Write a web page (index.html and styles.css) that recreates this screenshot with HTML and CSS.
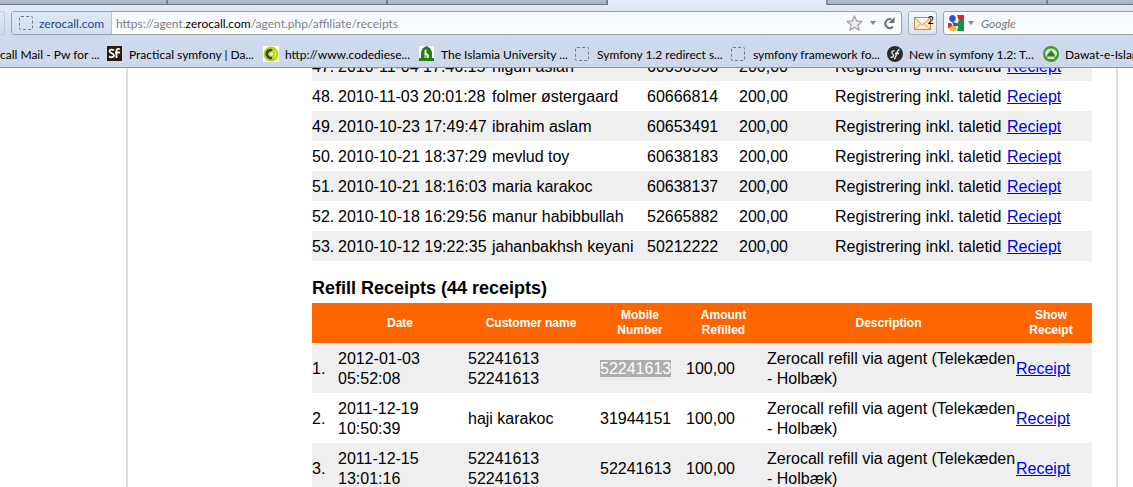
FILE: index.html
```html
<!DOCTYPE html>
<html lang="en">
<head>
<meta charset="utf-8">
<title>Receipts</title>
<link rel="stylesheet" href="styles.css">
</head>
<body>
<header class="chrome">
  <div class="tabs"><span class="tab first"></span><span class="tab"></span><span class="tab"></span><span class="tab active"></span><span class="tab"></span><span class="tab rest"></span></div>
  <div class="nav">
    <span class="stub"></span>
    <div class="address">
      <button class="identity" type="button"><span class="blank-icon"></span>zerocall.com</button>
      <div class="url" role="textbox" aria-label="Address" tabindex="0">https://agent.<b>zerocall.com</b>/agent.php/affiliate/receipts</div>
      <button class="tool" type="button" aria-label="Bookmark this page"><svg width="17" height="17" viewBox="0 0 17 17"><path d="M8.5 1l2.1 5 5.4.4-4.1 3.5 1.3 5.4-4.7-2.9-4.7 2.9 1.3-5.4L1 6.400l5.400-.4z" fill="#ececec" stroke="#a3a3a3" stroke-width="1.300" stroke-linejoin="round"/></svg></button>
      <button class="tool" type="button" aria-label="History"><svg width="6" height="4" viewBox="0 0 6 4"><path d="M0 0h6L3 4z" fill="#858585"/></svg></button>
      <button class="tool" type="button" aria-label="Reload"><svg width="13" height="13" viewBox="0 0 13 13"><path d="M8.500 2.400A4.500 4.500 0 1 0 10 9.800" fill="none" stroke="#6e6e6e" stroke-width="2"/><path d="M11.500 0v6H5.800z" fill="#6e6e6e"/></svg></button>
    </div>
    <button class="mail" type="button" aria-label="Mail, 2 new"><svg width="17" height="13" viewBox="0 0 17 13"><rect x=".5" y=".5" width="16" height="12" fill="#ffe8bd" stroke="#bf8660"/><path d="M1 12l6-5.500M16 12l-6-5.500" stroke="#d9a273" fill="none"/><path d="M1 1l7.500 7L16 1" fill="#fff8e8" stroke="#d08d5c"/></svg><span class="count">2</span></button>
    <div class="search">
      <svg width="16" height="16" viewBox="0 0 16 16"><path d="M0 0h16v16H0z" fill="#fff"/><path d="M9 0h7v6h-5z" fill="#e8202a"/><path d="M11 5h5v11H9l1-4-1-3z" fill="#0c9447"/><path d="M0 8h3l2 3-2 2H0z" fill="#d92b2b"/><ellipse cx="4.500" cy="3.500" rx="3.300" ry="3.500" fill="#2d57c8"/><path d="M4 7l5 1 1 3-4 .5z" fill="#2d57c8"/><ellipse cx="5" cy="13.500" rx="3.800" ry="2.500" fill="#f3b52a"/></svg>
      <svg width="6" height="4" viewBox="0 0 6 4"><path d="M0 0h6L3 4z" fill="#858585"/></svg>
      <input type="text" placeholder="Google" aria-label="Search">
    </div>
  </div>
  <nav class="bookmarks">
    <a class="cut" href="#">call Mail - Pw for ...</a>
    <a href="#"><svg width="16" height="16" viewBox="0 0 16 16"><path d="M0 0h15v15H0z" fill="#2d190b"/><path d="M7 4.200C5 3 2.500 3.500 2.500 5.200c0 2.300 4.500 1.800 4.500 4.200 0 2-2.800 2.300-5 1.200M9.500 12V5c0-2 1.500-2.500 3.500-2M8 6.500h5" fill="none" stroke="#fff" stroke-width="1.800"/></svg>Practical symfony | Da...</a>
    <a href="#"><svg width="16" height="16" viewBox="0 0 16 16"><path d="M0 0h16v16H0z" fill="#fff"/><circle cx="8" cy="8" r="7.500" fill="#b7d50c"/><path d="M9 4.200A4 4 0 1 0 9 11.800" fill="none" stroke="#3b3d48" stroke-width="2.600"/><circle cx="8.500" cy="8" r="1.800" fill="#eef6b5"/><path d="M11 4.500a4.500 4.500 0 0 1 0 7" fill="none" stroke="#eef6b5"/></svg>http://www.codediese...</a>
    <a href="#"><svg width="16" height="16" viewBox="0 0 16 16"><path d="M0 0h15v15H0z" fill="#fff"/><path d="M2 12V6l2-4 3.500-2L11 2l2 4v6h2v3H0v-3z" fill="#257e19"/><path d="M5.500 12V4.500l2-1.500v4l2.500 2v3z" fill="#e8f3e4"/><path d="M7 9v3" stroke="#257e19"/></svg>The Islamia University ...</a>
    <a href="#"><span class="blank-icon"></span>Symfony 1.2 redirect s...</a>
    <a href="#"><span class="blank-icon"></span>symfony framework fo...</a>
    <a href="#"><svg width="16" height="16" viewBox="0 0 16 16"><circle cx="8" cy="8" r="8" fill="#2c2b2f"/><path d="M7.500 5.200C6 4.500 4.200 5.500 5 7s2 1.500 1.500 3-2 1.500-3 1M7 13c2.500 0 2-9 5.500-9.500M8 7.500h4" fill="none" stroke="#f4f4f4" stroke-width="1.300"/></svg>New in symfony 1.2: T...</a>
    <a href="#"><svg width="16" height="16" viewBox="0 0 16 16"><circle cx="8" cy="8" r="8" fill="#43963c"/><ellipse cx="8" cy="7.500" rx="6" ry="5" fill="#d5ecb6"/><path d="M4 10.500c0-3 2-3 4-6.500 2 3.500 4 3.500 4 6.500z" fill="#327a30"/><path d="M4.500 12.500h7" stroke="#d5ecb6"/></svg>Dawat-e-Islami</a>
  </nav>
</header>
<main class="page">
  <div class="content">
    <table class="registrations">
      <colgroup><col class="c-num"><col class="c-154"><col class="c-155"><col class="c-92"><col class="c-96"><col class="c-172"><col></colgroup>
      <tbody>
      <tr><td>47.</td><td>2010-11-04 17:46:15</td><td>nigun aslan</td><td>60656556</td><td>200,00</td><td>Registrering inkl. taletid</td><td><a href="#">Reciept</a></td></tr>
      <tr><td>48.</td><td>2010-11-03 20:01:28</td><td>folmer østergaard</td><td>60666814</td><td>200,00</td><td>Registrering inkl. taletid</td><td><a href="#">Reciept</a></td></tr>
      <tr><td>49.</td><td>2010-10-23 17:49:47</td><td>ibrahim aslam</td><td>60653491</td><td>200,00</td><td>Registrering inkl. taletid</td><td><a href="#">Reciept</a></td></tr>
      <tr><td>50.</td><td>2010-10-21 18:37:29</td><td>mevlud toy</td><td>60638183</td><td>200,00</td><td>Registrering inkl. taletid</td><td><a href="#">Reciept</a></td></tr>
      <tr><td>51.</td><td>2010-10-21 18:16:03</td><td>maria karakoc</td><td>60638137</td><td>200,00</td><td>Registrering inkl. taletid</td><td><a href="#">Reciept</a></td></tr>
      <tr><td>52.</td><td>2010-10-18 16:29:56</td><td>manur habibbullah</td><td>52665882</td><td>200,00</td><td>Registrering inkl. taletid</td><td><a href="#">Reciept</a></td></tr>
      <tr><td>53.</td><td>2010-10-12 19:22:35</td><td>jahanbakhsh keyani</td><td>50212222</td><td>200,00</td><td>Registrering inkl. taletid</td><td><a href="#">Reciept</a></td></tr>
      </tbody>
    </table>
    <h2>Refill Receipts (44 receipts)</h2>
    <table class="refills">
      <colgroup><col class="c-num"><col class="c-130"><col class="c-132"><col class="c-86"><col class="c-81"><col class="c-249"><col></colgroup>
      <thead>
      <tr><th></th><th>Date</th><th>Customer name</th><th>Mobile<br>Number</th><th>Amount<br>Refilled</th><th>Description</th><th>Show<br>Receipt</th></tr>
      </thead>
      <tbody>
      <tr><td>1.</td><td>2012-01-03<br>05:52:08</td><td>52241613<br>52241613</td><td><span class="selected">52241613</span></td><td>100,00</td><td>Zerocall refill via agent (Telekæden<br>- Holbæk)</td><td><a href="#">Receipt</a></td></tr>
      <tr><td>2.</td><td>2011-12-19<br>10:50:39</td><td>haji karakoc</td><td>31944151</td><td>100,00</td><td>Zerocall refill via agent (Telekæden<br>- Holbæk)</td><td><a href="#">Receipt</a></td></tr>
      <tr><td>3.</td><td>2011-12-15<br>13:01:16</td><td>52241613<br>52241613</td><td>52241613</td><td>100,00</td><td>Zerocall refill via agent (Telekæden<br>- Holbæk)</td><td><a href="#">Receipt</a></td></tr>
      </tbody>
    </table>
  </div>
</main>
</body>
</html>
```
FILE: styles.css
```css
* { box-sizing: border-box; }
body {
  margin: 0;
  height: 100vh;
  overflow: hidden;
  display: flex;
  flex-direction: column;
  background: #fff;
  color: #000;
  font-family: "Liberation Sans", Arial, sans-serif;
  font-size: 16px;
}
button, input { font: inherit; border: 0; margin: 0; padding: 0; background: none; }
svg { display: block; flex: none; }

.chrome {
  flex: none;
  font-family: Lato, "Open Sans", sans-serif;
  font-size: 12px;
  background: linear-gradient(#e6edf7, #cfdaeb 36px, #cdd9eb);
  border-bottom: 1px solid #8e939e;
}
.tabs { display: flex; height: 5px; }
.tab {
  width: 220px;
  background: linear-gradient(#b5bdcb, #a9b3c3);
  border-right: 2px solid #74808c;
  border-bottom: 1px solid #6b7682;
}
.tab.first { width: 168px; }
.tab.active { background: none; border-bottom: 0; border-right-color: #818b98; }
.tab.rest { flex: 1; border-right: 0; }

.nav { display: flex; align-items: center; height: 36px; gap: 6px; }
.stub { width: 5px; height: 24px; border: 1px solid #c2cbd9; border-left: 0; border-radius: 0 3px 3px 0; }
.address, .search {
  display: flex;
  align-items: center;
  height: 24px;
  background: linear-gradient(#f4f8fd, #fdfeff);
  border: 1px solid #98a2af;
  border-radius: 3px;
}
.address { flex: 1; min-width: 0; padding-right: 5px; }
.identity {
  display: flex;
  align-items: center;
  align-self: stretch;
  gap: 6px;
  width: 100px;
  flex: none;
  padding-left: 7px;
  color: #27488a;
  background: linear-gradient(#dde8f5, #d0dff0);
  border-right: 1px solid #b4c4da;
}
.blank-icon { width: 14px; height: 14px; flex: none; border: 1px dashed #747b86; border-radius: 2px; }
.url { flex: 1; min-width: 0; padding-left: 4px; color: #7d7f83; white-space: nowrap; overflow: hidden; }
.url b { color: #000; font-weight: 400; }
.tool { margin-left: 7px; }
.mail {
  position: relative;
  display: flex;
  align-items: center;
  padding-left: 5px;
  width: 29px;
  height: 24px;
  background: linear-gradient(#f7f9fc, #dde4ee);
  border: 1px solid #a7b0be;
  border-radius: 3px;
}
.count { position: absolute; right: 2px; top: 1px; font-size: 11px; line-height: 14px; }
.search { width: 210px; margin-right: -20px; padding-left: 4px; gap: 4px; }
.search input { flex: 1; min-width: 0; padding-left: 3px; font-style: italic; outline: 0; }
.search input::placeholder { color: #737679; opacity: 1; }

.bookmarks { display: flex; align-items: center; height: 26px; overflow: hidden; }
.bookmarks a {
  display: flex;
  align-items: center;
  gap: 6px;
  flex: none;
  width: 156px;
  color: #000;
  text-decoration: none;
  white-space: nowrap;
}
.bookmarks .cut { width: 107px; }
.bookmarks .blank-icon { margin-right: 2px; }

.page { flex: 1; min-height: 0; overflow: hidden; margin: 0 15px 0 126px; border: 2px solid #ddd; border-width: 0 2px; }
.content { margin-top: -17px; padding: 0 24px 0 184px; }
table { width: 100%; table-layout: fixed; border-collapse: collapse; }
td { padding: 6px 0 4px; line-height: 20px; white-space: nowrap; }
th { padding: 5px 6px 5px 0; font-size: 12px; line-height: 15px; color: #fff; background: #f60; }
tbody tr:nth-child(odd) { background: #efefef; }
.c-num { width: 26px; }
.c-154 { width: 154px; }
.c-155 { width: 155px; }
.c-92 { width: 92px; }
.c-96 { width: 96px; }
.c-172 { width: 172px; }
.c-130 { width: 130px; }
.c-132 { width: 132px; }
.c-86 { width: 86px; }
.c-81 { width: 81px; }
.c-249 { width: 249px; }
td a { color: #00e; }
h2 { margin: 17px 0 4px; font-size: 18px; line-height: 21px; }
.selected { background: #aeaeae; color: #fff; }
```
